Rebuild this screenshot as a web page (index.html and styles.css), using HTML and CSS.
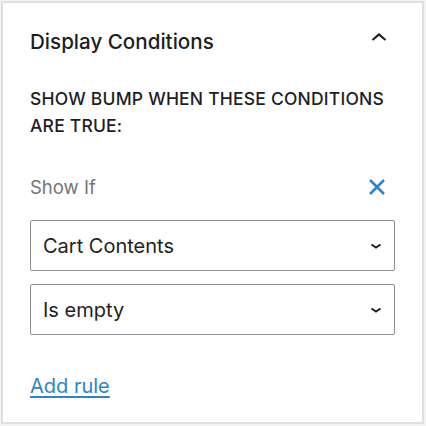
FILE: index.html
```html
<!DOCTYPE html>
<html>
<head>
<meta charset="utf-8">
<link rel="stylesheet" href="styles.css">
</head>
<body>
<div class="panel">
  <div class="panel-header">
    <h2 class="panel-title">Display Conditions</h2>
    <svg class="chevron-up" width="24" height="24" viewBox="0 0 24 24"><path d="M5.5 14 L12 8.5 L18.5 14" fill="none" stroke="#1e1e1e" stroke-width="2.2"/></svg>
  </div>
  <p class="intro">SHOW BUMP WHEN THESE CONDITIONS ARE TRUE:</p>
  <div class="rule-head">
    <span class="rule-label">Show If</span>
    <svg class="remove" width="20" height="20" viewBox="0 0 20 20"><path d="M3 3 L17 17 M17 3 L3 17" stroke="#2f83c9" stroke-width="2.6" fill="none"/></svg>
  </div>
  <div class="select"><span>Cart Contents</span><svg class="chev" width="14" height="10" viewBox="0 0 14 10"><path d="M2.5 3.5 L7 6.5 L11.5 3.5" fill="none" stroke="#1e1e1e" stroke-width="1.9"/></svg></div>
  <div class="select"><span>Is empty</span><svg class="chev" width="14" height="10" viewBox="0 0 14 10"><path d="M2.5 3.5 L7 6.5 L11.5 3.5" fill="none" stroke="#1e1e1e" stroke-width="1.9"/></svg></div>
  <a class="add-rule" href="#">Add rule</a>
</div>
</body>
</html>
```

FILE: styles.css
```css
html, body {
  margin: 0;
  padding: 0;
  background: #f3f3f3;
}
body {
  padding: 1px 2px 2px 1px;
  width: 426px;
  height: 426px;
  box-sizing: border-box;
  font-family: Inter, "Noto Sans", sans-serif;
  color: #1e1e1e;
}
.panel {
  box-sizing: border-box;
  height: 423px;
  width: 423px;
  background: #fff;
  border: 2px solid #e0e0e0;
  padding: 0 27px 0 27px;
}
.panel-header {
  display: flex;
  align-items: center;
  justify-content: space-between;
  height: 76px;
}
.panel-title {
  margin: 0;
  font-size: 20.6px;
  font-weight: 500;
}
.chevron-up {
  margin-right: 4px;
  margin-top: -6px;
}
.intro {
  margin: 5.5px 0 0;
  font-size: 17.5px;
  font-weight: 500;
  line-height: 27px;
  letter-spacing: 0.2px;
  color: #1e1e1e;
}
.rule-head {
  display: flex;
  align-items: center;
  justify-content: space-between;
  margin-top: 37.5px;
  height: 22px;
}
.rule-label {
  font-size: 18.5px;
  color: #757575;
}
.remove {
  margin-right: 8px;
}
.select {
  display: flex;
  align-items: center;
  justify-content: space-between;
  box-sizing: border-box;
  height: 51px;
  margin-top: 13px;
  border: 1px solid #8c8f94;
  border-radius: 2px;
  padding: 0 12px;
  font-size: 20px;
}
.rule-head + .select {
  margin-top: 22px;
}
.chev {
  margin-right: -1px;
}
.add-rule {
  display: inline-block;
  margin-top: 39px;
  font-size: 20px;
  color: #2f83c9;
  text-decoration: underline;
  text-underline-offset: 3px;
}
```
